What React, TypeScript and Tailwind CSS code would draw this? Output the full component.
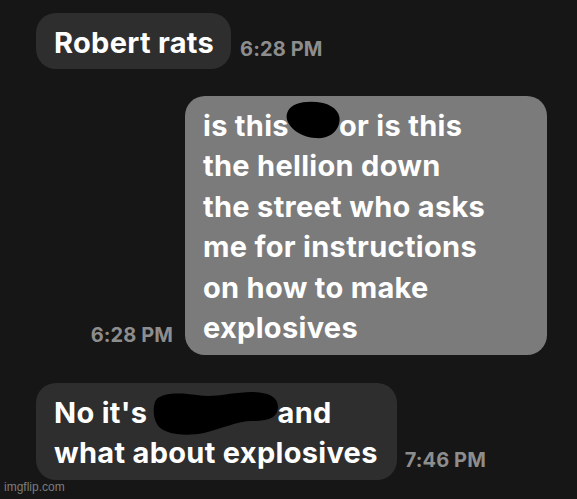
import React from "react";

function Blob({ w, h, d }: { w: number; h: number; d: string }) {
  return (
    <svg width={w} height={h} viewBox={`0 0 ${w} ${h}`} className="absolute left-0 top-0">
      <path d={d} fill="#000" />
    </svg>
  );
}

export default function App() {
  const font = { fontFamily: "Inter, 'Liberation Sans', sans-serif" };
  return (
    <div className="relative w-[577px] h-[499px] bg-[#161616] overflow-hidden" style={font}>
      <div className="flex flex-col pt-[13px]">
        {/* incoming 1 */}
        <div className="flex items-end pl-[36px]">
          <div className="bg-[#2e2e2e] rounded-[20px] pl-[18px] pr-[17px] pt-[10px] pb-[5px] text-white text-[29px] leading-[40.5px] font-bold tracking-[0.3px]">
            Robert rats
          </div>
          <span className="ml-[9px] mb-[5px] text-[#8d8d8d] text-[20px] font-bold tracking-[0.1px]">6:28 PM</span>
        </div>

        {/* outgoing */}
        <div className="flex items-end justify-end pr-[30px] mt-[27px]">
          <span className="mr-[12px] mb-[5px] text-[#8d8d8d] text-[20px] font-bold tracking-[0.1px]">6:28 PM</span>
          <div className="w-[362px] bg-[#7b7b7b] rounded-[20px] pl-[18px] pt-[10px] pb-[6px] text-white text-[29px] leading-[40.5px] font-bold tracking-[0.3px]">
            is this
            <span className="relative inline-block w-[50px] h-[1px] align-baseline">
              <span className="absolute left-[-6px] top-[-36px]">
                <Blob w={60} h={42} d="M5 12 C9 3 26 1 40 4 C52 7 59 15 56 25 C53 35 44 40 32 39 C20 38 10 32 6 25 C3 20 3 16 5 12 Z" />
              </span>
            </span>
            or is this
            <br />
            the hellion down
            <br />
            the street who asks
            <br />
            me for instructions
            <br />
            on how to make
            <br />
            explosives
          </div>
        </div>

        {/* incoming 2 */}
        <div className="flex items-end pl-[36px] mt-[28px]">
          <div className="bg-[#2e2e2e] rounded-[20px] pl-[18px] pr-[19px] pt-[10px] pb-[6px] text-white text-[29px] leading-[40.5px] font-bold tracking-[0.3px]">
            No it's{" "}
            <span className="relative inline-block w-[116px] h-[1px] align-baseline">
              <span className="absolute left-[-2px] top-[-32px]">
                <Blob w={128} h={48} d="M3 12 C6 3 25 2 45 5 C62 8 75 3 98 2 C115 2 126 6 126 17 C126 27 118 31 100 31 C85 31 72 38 52 43 C32 47 10 44 5 34 C1 27 1 18 3 12 Z" />
              </span>
            </span>{" "}
            and
            <br />
            what about explosives
          </div>
          <span className="ml-[8px] mb-[5px] text-[#8d8d8d] text-[20px] font-bold tracking-[0.1px]">7:46 PM</span>
        </div>
      </div>

      <span className="absolute left-[4px] bottom-[3px] text-[12px] text-[#7c7c7c]" style={{ fontFamily: "'Liberation Sans', sans-serif" }}>
        imgflip.com
      </span>
    </div>
  );
}
